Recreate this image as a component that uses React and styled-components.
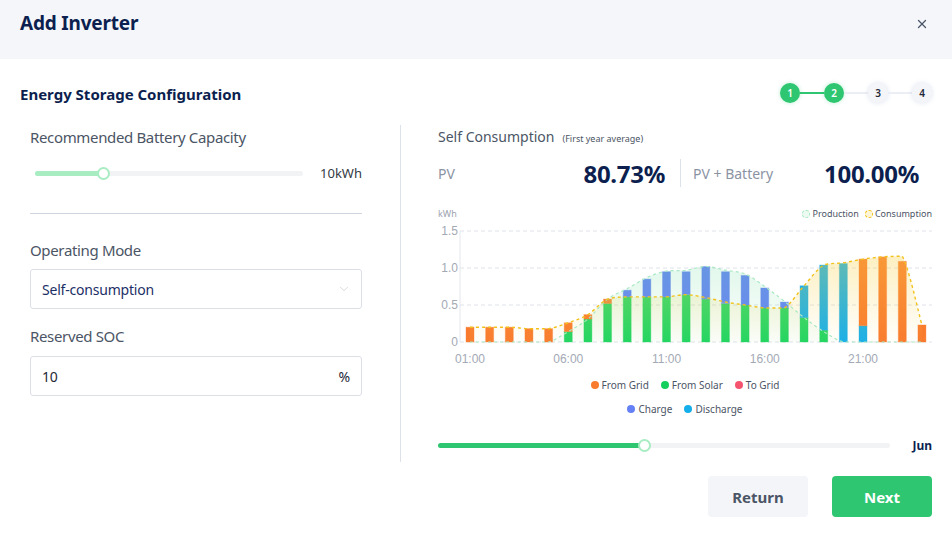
import React from "react";
import styled, { createGlobalStyle } from "styled-components";
import { X, ChevronDown } from "lucide-react";

const GlobalStyle = createGlobalStyle`
  html, body { margin: 0; padding: 0; background: #fff; }
  body { font-family: "Noto Sans", "Open Sans", sans-serif; color: #0c1f4f; }
  * { box-sizing: border-box; }
`;

const Page = styled.div`
  width: 952px;
  height: 533px;
  background: #fff;
  overflow: hidden;
`;

const Header = styled.div`
  height: 59px;
  background: #f5f6fa;
  display: flex;
  align-items: flex-start;
  justify-content: space-between;
  padding: 9px 23px 0 20px;
`;

const Title = styled.h1`
  margin: 0;
  font-size: 19px;
  line-height: 28px;
  font-weight: 700;
  letter-spacing: -0.2px;
  color: #0c1f4f;
`;

const CloseBtn = styled.button`
  border: 0;
  background: none;
  padding: 0;
  margin-top: 8px;
  width: 14px;
  height: 14px;
  color: #4a5568;
  display: flex;
`;

const Body = styled.div`
  padding: 0 20px;
`;

const SectionRow = styled.div`
  height: 66px;
  padding-top: 3px;
  display: flex;
  align-items: center;
  justify-content: space-between;
`;

const SectionTitle = styled.h2`
  margin: 0;
  font-size: 15px;
  font-weight: 700;
  color: #0c1f4f;
`;

const Stepper = styled.div`
  display: flex;
  align-items: center;
  margin-top: -2px;
`;

const Step = styled.div`
  width: 20px;
  height: 20px;
  border-radius: 50%;
  display: flex;
  align-items: center;
  justify-content: center;
  font-size: 10px;
  font-weight: 600;
  background: ${(p) => (p.$done ? "#2ec671" : "#f4f5f9")};
  color: ${(p) => (p.$done ? "#fff" : "#1f2937")};
  box-shadow: ${(p) => (p.$done ? "0 0 4px rgba(46,198,113,0.3)" : "0 0 5px rgba(180,190,220,0.45)")};
`;

const Connector = styled.div`
  width: 24px;
  height: 2px;
  background: ${(p) => (p.$done ? "#2ec671" : "#eceef5")};
`;

const Columns = styled.div`
  display: grid;
  grid-template-columns: 381px 1fr;
  height: 337px;
`;

const LeftCol = styled.div`
  padding: 0 38px 0 10px;
  border-right: 1px solid #dde1e8;
`;

const RightCol = styled.div`
  padding-left: 37px;
  display: flex;
  flex-direction: column;
`;

const FieldLabel = styled.div`
  font-size: 15px;
  line-height: 24px;
  letter-spacing: -0.35px;
  color: #4b5565;
  margin-top: ${(p) => p.$mt || 0}px;
`;

const SliderRow = styled.div`
  display: flex;
  align-items: center;
  height: 24px;
  margin-top: ${(p) => p.$mt || 0}px;
  padding-left: ${(p) => p.$pl || 0}px;
`;

const Track = styled.div`
  position: relative;
  flex: 1;
  height: 5px;
  border-radius: 3px;
  background: #f2f3f5;
`;

const Fill = styled.div`
  height: 100%;
  border-radius: 3px;
  background: ${(p) => p.$color};
`;

const Thumb = styled.div`
  position: absolute;
  top: 50%;
  width: 13px;
  height: 13px;
  margin: -6.5px 0 0 -6.5px;
  border-radius: 50%;
  background: #fff;
  border: 2px solid #a8ecc2;
`;

const SliderValue = styled.div`
  width: ${(p) => p.$w}px;
  text-align: right;
  font-size: ${(p) => p.$size}px;
  font-weight: ${(p) => (p.$bold ? 700 : 400)};
  color: ${(p) => (p.$bold ? "#0c1f4f" : "#333a44")};
`;

const Divider = styled.div`
  height: 1px;
  background: #cfd5df;
  margin-top: 28px;
`;

const InputBox = styled.div`
  height: 40px;
  border: 1px solid #dcdfe6;
  border-radius: 3px;
  display: flex;
  align-items: center;
  justify-content: space-between;
  padding: 0 11px 0 11px;
  margin-top: ${(p) => p.$mt || 0}px;
  font-size: 14px;
  letter-spacing: -0.2px;
  color: ${(p) => p.$color || "#1f2937"};
`;

const ChevronWrap = styled.span`
  display: flex;
  color: #c4c8d0;
  margin-right: -1px;
`;

const Unit = styled.span`
  color: #1f2937;
  font-size: 14px;
`;

const RightTitle = styled.div`
  display: flex;
  align-items: baseline;
  gap: 8px;
  line-height: 24px;
  font-size: 14px;
  color: #4b5565;
`;

const Small = styled.span`
  font-size: 9px;
  color: #4b5565;
`;

const StatsRow = styled.div`
  display: flex;
  align-items: center;
  height: 28px;
  margin-top: 8px;
`;

const StatBlock = styled.div`
  display: flex;
  align-items: center;
  justify-content: space-between;
  width: ${(p) => (p.$w ? `${p.$w}px` : "auto")};
  flex: ${(p) => (p.$w ? "none" : 1)};
  padding: ${(p) => p.$pad};
`;

const StatLabel = styled.span`
  font-size: 14px;
  color: #8b93a3;
`;

const StatValue = styled.span`
  font-size: 24px;
  font-weight: 700;
  color: #0c1f4f;
  letter-spacing: -0.3px;
`;

const StatSep = styled.div`
  width: 1px;
  height: 28px;
  background: #dde1e8;
`;

const ChartHead = styled.div`
  display: flex;
  justify-content: space-between;
  align-items: center;
  height: 15px;
  margin-top: 19px;
  font-size: 9px;
  color: #9ca3af;
`;

const CurveLegend = styled.div`
  display: flex;
  gap: 6px;
  color: #4b5565;
`;

const CurveItem = styled.span`
  display: flex;
  align-items: center;
  gap: 2px;
`;

const CurveDot = styled.span`
  width: 8px;
  height: 8px;
  border-radius: 50%;
  border: 1px dashed ${(p) => p.$c};
  background: ${(p) => p.$bg};
`;

const Legend = styled.div`
  display: flex;
  justify-content: center;
  gap: 12px;
  height: 14px;
  align-items: center;
  margin-top: ${(p) => p.$mt}px;
  font-size: 10px;
  color: #4b5565;
`;

const LegendItem = styled.span`
  display: flex;
  align-items: center;
  gap: 3px;
`;

const Dot = styled.span`
  width: 8px;
  height: 8px;
  border-radius: 50%;
  background: ${(p) => p.$c};
`;

const Footer = styled.div`
  display: flex;
  justify-content: flex-end;
  gap: 24px;
  padding-top: 14px;
`;

const Button = styled.button`
  width: 100px;
  height: 41px;
  border: 0;
  border-radius: 4px;
  font-family: inherit;
  font-size: 15px;
  font-weight: 700;
  background: ${(p) => (p.$primary ? "#2ec671" : "#f4f5f9")};
  color: ${(p) => (p.$primary ? "#fff" : "#4b5565")};
`;

/* chart data, kWh per hour */
const solar = [0, 0, 0, 0, 0, 0.14, 0.31, 0.52, 0.61, 0.61, 0.61, 0.64, 0.58, 0.52, 0.5, 0.46, 0.46, 0.33, 0.16, 0, 0, 0, 0, 0];
const charge = [0, 0, 0, 0, 0, 0, 0, 0, 0.09, 0.24, 0.34, 0.31, 0.44, 0.43, 0.4, 0.27, 0.08, 0, 0, 0, 0, 0, 0, 0];
const discharge = [0, 0, 0, 0, 0, 0, 0, 0, 0, 0, 0, 0, 0, 0, 0, 0, 0, 0.43, 0.88, 1.06, 0.22, 0, 0, 0];
const grid = [0.2, 0.2, 0.2, 0.18, 0.18, 0.12, 0.06, 0.06, 0, 0, 0, 0, 0, 0, 0, 0, 0, 0, 0, 0, 0.9, 1.15, 1.09, 0.23];
const production = [0, 0, 0, 0, 0, 0.14, 0.31, 0.58, 0.72, 0.87, 0.96, 0.97, 1.02, 0.97, 0.92, 0.75, 0.55, 0.33, 0.14, 0, 0, 0, 0, 0];
const consumption = [0.2, 0.2, 0.2, 0.18, 0.18, 0.26, 0.37, 0.58, 0.61, 0.61, 0.61, 0.64, 0.6, 0.54, 0.5, 0.46, 0.46, 0.76, 1.04, 1.07, 1.12, 1.15, 1.16, 0.23];

const W = 494;
const H = 148;
const BASE = 121;
const PX = 74;
const bx = (i) => 32 + i * 19.65;
const by = (v) => BASE - v * PX;
const clamp = (v, a, b) => Math.max(Math.min(a, b), Math.min(Math.max(a, b), v));

const smooth = (vals) => {
  const pts = vals.map((v, i) => [bx(i), by(v)]);
  let d = `M${pts[0][0]},${pts[0][1]}`;
  for (let i = 0; i < pts.length - 1; i++) {
    const p0 = pts[i - 1] || pts[i];
    const p1 = pts[i];
    const p2 = pts[i + 1];
    const p3 = pts[i + 2] || p2;
    const c1x = p1[0] + (p2[0] - p0[0]) / 6;
    const c1y = clamp(p1[1] + (p2[1] - p0[1]) / 6, p1[1], p2[1]);
    const c2x = p2[0] - (p3[0] - p1[0]) / 6;
    const c2y = clamp(p2[1] - (p3[1] - p1[1]) / 6, p1[1], p2[1]);
    d += ` C${c1x.toFixed(1)},${c1y.toFixed(1)} ${c2x.toFixed(1)},${c2y.toFixed(1)} ${p2[0].toFixed(1)},${p2[1].toFixed(1)}`;
  }
  return d;
};

const area = (vals) => `${smooth(vals)} L${bx(vals.length - 1)},${BASE} L${bx(0)},${BASE} Z`;

const SERIES = [
  [solar, "#1fd560"],
  [discharge, "#18afe9"],
  [grid, "#f97b2e"],
  [charge, "#6784f4"],
];

const EnergyChart = () => (
  <svg width={W} height={H} viewBox={`0 0 ${W} ${H}`} style={{ display: "block", fontFamily: "Liberation Sans, Arial, sans-serif" }}>
    <defs>
      <linearGradient id="consFill" x1="0" y1="0" x2="0" y2="1">
        <stop offset="0" stopColor="#f7d24a" stopOpacity="0.34" />
        <stop offset="1" stopColor="#f7d24a" stopOpacity="0.02" />
      </linearGradient>
      <linearGradient id="prodFill" x1="0" y1="0" x2="0" y2="1">
        <stop offset="0" stopColor="#6fdca0" stopOpacity="0.2" />
        <stop offset="1" stopColor="#6fdca0" stopOpacity="0.03" />
      </linearGradient>
    </defs>
    {[0, 0.5, 1, 1.5].map((v) => (
      <g key={v}>
        <line x1={22} x2={494} y1={by(v)} y2={by(v)} stroke="#dfe2e8" strokeDasharray="4 3" />
        <text x={20} y={by(v) + 4} textAnchor="end" fontSize="12" fill="#a3a9b5">
          {v === 0 ? "0" : v.toFixed(1)}
        </text>
      </g>
    ))}
    <line x1={22} x2={22} y1={by(1.5)} y2={BASE} stroke="#e3e6ec" />
    {solar.map((_, i) => {
      let acc = 0;
      return SERIES.map(([data, color], k) => {
        const v = data[i];
        if (!v) return null;
        const y = by(acc + v);
        acc += v;
        return (
          <rect
            key={`${i}-${k}`}
            x={bx(i) - 4}
            y={y}
            width={8}
            height={v * PX}
            fill={color}
            stroke={color}
            strokeOpacity="0.35"
            strokeWidth="1"
          />
        );
      });
    })}
    <path d={area(consumption)} fill="url(#consFill)" />
    <path d={area(production)} fill="url(#prodFill)" />
    <path d={smooth(production)} fill="none" stroke="#a9e8c4" strokeWidth="1.2" strokeDasharray="3 3" />
    <path d={smooth(consumption)} fill="none" stroke="#f2c21b" strokeWidth="1.4" strokeDasharray="3 3" />
    {["01:00", "06:00", "11:00", "16:00", "21:00"].map((t, k) => (
      <text key={t} x={bx(k * 5)} y={142} textAnchor="middle" fontSize="12" fill="#a3a9b5">
        {t}
      </text>
    ))}
  </svg>
);

const Slider = ({ pct, color, mt, pl, value, valueW, size, bold }) => (
  <SliderRow $mt={mt} $pl={pl}>
    <Track>
      <Fill $color={color} style={{ width: `${pct}%` }} />
      <Thumb style={{ left: `${pct}%` }} />
    </Track>
    <SliderValue $w={valueW} $size={size} $bold={bold}>
      {value}
    </SliderValue>
  </SliderRow>
);

export default function App() {
  return (
    <Page>
      <GlobalStyle />
      <Header>
        <Title>Add Inverter</Title>
        <CloseBtn aria-label="close">
          <X size={14} strokeWidth={2.2} />
        </CloseBtn>
      </Header>
      <Body>
        <SectionRow>
          <SectionTitle>Energy Storage Configuration</SectionTitle>
          <Stepper>
            <Step $done>1</Step>
            <Connector $done />
            <Step $done>2</Step>
            <Connector />
            <Step>3</Step>
            <Connector />
            <Step>4</Step>
          </Stepper>
        </SectionRow>
        <Columns>
          <LeftCol>
            <FieldLabel>Recommended Battery Capacity</FieldLabel>
            <Slider pct={25.7} color="#a8ecc2" mt={12} pl={5} value="10kWh" valueW={59} size={13} />
            <Divider />
            <FieldLabel $mt={24}>Operating Mode</FieldLabel>
            <InputBox $mt={7} $color="#1c2f66">
              <span>Self-consumption</span>
              <ChevronWrap>
                <ChevronDown size={14} strokeWidth={1.2} />
              </ChevronWrap>
            </InputBox>
            <FieldLabel $mt={15}>Reserved SOC</FieldLabel>
            <InputBox $mt={8}>
              <span>10</span>
              <Unit>%</Unit>
            </InputBox>
          </LeftCol>
          <RightCol>
            <RightTitle>
              Self Consumption <Small>(First year average)</Small>
            </RightTitle>
            <StatsRow>
              <StatBlock $w={242} $pad="0 15px 0 0">
                <StatLabel>PV</StatLabel>
                <StatValue>80.73%</StatValue>
              </StatBlock>
              <StatSep />
              <StatBlock $pad="0 13px 0 12px">
                <StatLabel>PV + Battery</StatLabel>
                <StatValue>100.00%</StatValue>
              </StatBlock>
            </StatsRow>
            <ChartHead>
              <span>kWh</span>
              <CurveLegend>
                <CurveItem>
                  <CurveDot $c="#a9e8c4" $bg="#ecfaf2" />
                  Production
                </CurveItem>
                <CurveItem>
                  <CurveDot $c="#f2c21b" $bg="#fdf5d6" />
                  Consumption
                </CurveItem>
              </CurveLegend>
            </ChartHead>
            <EnergyChart />
            <Legend $mt={9}>
              <LegendItem><Dot $c="#f97b2e" />From Grid</LegendItem>
              <LegendItem><Dot $c="#14cf5c" />From Solar</LegendItem>
              <LegendItem><Dot $c="#f5546f" />To Grid</LegendItem>
            </Legend>
            <Legend $mt={10}>
              <LegendItem><Dot $c="#6480f4" />Charge</LegendItem>
              <LegendItem><Dot $c="#14aeea" />Discharge</LegendItem>
            </Legend>
            <Slider pct={45.6} color="#2ec671" mt={17} value="Jun" valueW={42} size={12} bold />
          </RightCol>
        </Columns>
        <Footer>
          <Button>Return</Button>
          <Button $primary>Next</Button>
        </Footer>
      </Body>
    </Page>
  );
}
